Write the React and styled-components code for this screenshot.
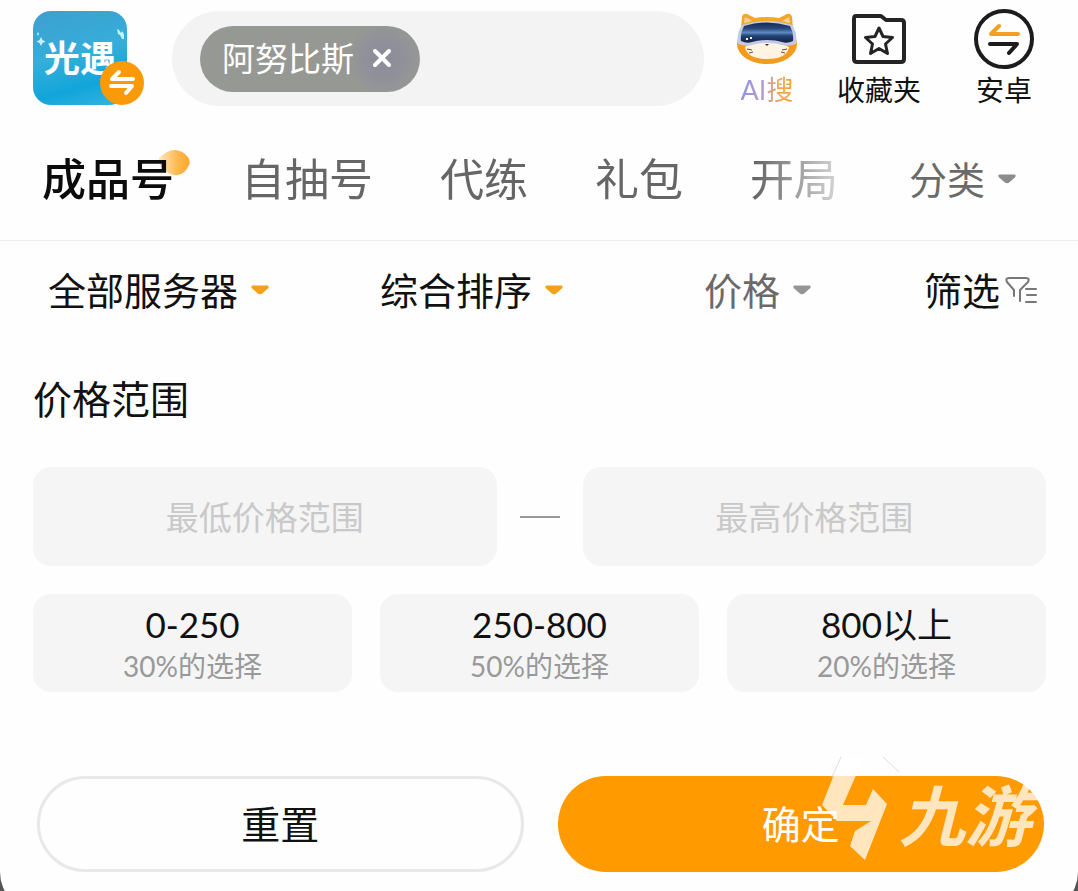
import React, { useState } from 'react';
import styled, { createGlobalStyle } from 'styled-components';

const GlobalStyle = createGlobalStyle`
    * {
        box-sizing: border-box;
    }

    body {
        margin: 0;
        background: #555;
        color: #111;
        font-family: Lato, "Noto Sans CJK SC", sans-serif;
    }

    button, input, select {
        margin: 0;
        border: 0;
        padding: 0;
        background: none;
        color: inherit;
        font: inherit;
    }

    button {
        cursor: pointer;
    }

    svg {
        display: block;
        flex: none;
    }
`;

const Page = styled.div`
    height: 100vh;
    overflow: hidden;
`;

const Sheet = styled.main`
    background: #fefefe;
    border-radius: 0 0 40px 40px;
    padding-bottom: 40px;
`;

const Header = styled.header`
    display: flex;
    align-items: flex-start;
    padding: 8px 44px 0 33px;
    height: 119px;
`;

const GameLogo = styled.button`
    position: relative;
    flex: none;
    margin-top: 3px;
    width: 94px;
    height: 94px;
    border-radius: 18px;
    background: linear-gradient(165deg, #3d9fcf 0%, #36aeda 45%, #12a5da 75%, #35b5e0 100%);
    color: #fff;
    font-size: 36px;
    line-height: 94px;
    font-weight: 700;
`;

const LogoStars = styled.svg`
    position: absolute;
    top: 0;
    left: 0;
`;

const SwapBadge = styled.svg`
    position: absolute;
    right: -17px;
    bottom: 0;
`;

const SearchBar = styled.div`
    display: flex;
    align-items: center;
    flex: 1;
    min-width: 0;
    margin: 3px 0 0 45px;
    padding: 0 28px;
    height: 95px;
    border-radius: 48px;
    background: #f2f3f2;
`;

const SearchInput = styled.input`
    flex: 1;
    min-width: 0;
    height: 66px;
    outline: none;
    font-size: 33px;
`;

const Tag = styled.span`
    display: flex;
    align-items: center;
    justify-content: space-between;
    flex: none;
    padding: 0 29px 2px 22px;
    width: 220px;
    height: 66px;
    border-radius: 33px;
    background: radial-gradient(circle at 184px 33px, #8c8c99 0, #8f909a 18px, #969894 36px);
    color: #fff;
    font-size: 33px;
    line-height: 64px;
`;

const Actions = styled.nav`
    display: flex;
    gap: 40px;
    flex: none;
    margin-left: 33px;
    width: 297px;
`;

const Action = styled.button`
    display: flex;
    flex-direction: column;
    align-items: center;
    min-width: 60px;
    font-size: ${props => (props.$small ? 27 : 28)}px;
    line-height: 40px;
    white-space: nowrap;

    &:last-child {
        margin-left: auto;
    }
`;

const IconBox = styled.span`
    display: flex;
    align-items: center;
    height: 62px;
`;

const AiLabel = styled.span`
    background: linear-gradient(90deg, #8f95e0 0%, #b49ccf 40%, #efa94f 75%, #f0a33c 100%);
    background-clip: text;
    color: transparent;
`;

const Tabs = styled.nav`
    display: flex;
    align-items: center;
    height: 122px;
    padding: 0 62px 2px 42px;
    border-bottom: 1px solid #ececec;
`;

const TabScroller = styled.div`
    display: flex;
    flex: 1;
    gap: 67px;
    min-width: 0;
    overflow: hidden;
    margin-right: 64px;
    mask-image: linear-gradient(90deg, #000 calc(100% - 90px), rgba(0, 0, 0, 0.2));
`;

const Tab = styled.button`
    position: relative;
    z-index: 0;
    flex: none;
    color: ${props => (props.$active ? '#0c0c0c' : '#666')};
    font-size: 44px;
    line-height: 64px;
    font-weight: ${props => (props.$active ? 500 : 400)};
`;

const TabSpot = styled.svg`
    position: absolute;
    z-index: -1;
    top: 2px;
    right: -17px;
`;

const Dropdown = styled.button`
    display: flex;
    align-items: center;
    gap: ${props => props.$gap || 13}px;
    color: ${props => (props.$muted ? '#6a6a6a' : '#111')};
    font-size: 38px;
    line-height: 56px;
    white-space: nowrap;
`;

const Filters = styled.div`
    display: grid;
    grid-template-columns: 332fr 324fr 220fr auto;
    align-items: center;
    height: 99px;
    padding: 0 41px 2px 48px;
`;

const Panel = styled.form`
    padding: 0 32px 0 33px;
`;

const PanelTitle = styled.h2`
    margin: 0;
    padding-top: 31px;
    height: 127px;
    font-size: 39px;
    line-height: 56px;
    font-weight: 400;
`;

const RangeRow = styled.div`
    display: flex;
    align-items: center;
    gap: 23px;
`;

const PriceInput = styled.input`
    flex: 1;
    min-width: 0;
    height: 99px;
    border-radius: 18px;
    background: #f5f5f5;
    text-align: center;
    font-size: 33px;

    &::placeholder {
        color: #c9c9c9;
        opacity: 1;
    }
`;

const Dash = styled.span`
    width: 40px;
    height: 2px;
    background: #999;
`;

const Presets = styled.div`
    display: grid;
    grid-template-columns: repeat(3, 1fr);
    gap: 28px;
    margin-top: 28px;
`;

const Preset = styled.button`
    display: flex;
    flex-direction: column;
    align-items: center;
    justify-content: center;
    padding-top: 4px;
    height: 98px;
    border-radius: 18px;
    background: #f5f5f5;
    font-size: 35px;
    line-height: 42px;
`;

const PresetHint = styled.span`
    color: #999;
    font-size: 28px;
`;

const Footer = styled.div`
    position: relative;
    display: grid;
    grid-template-columns: 1fr 1fr;
    gap: 34px;
    margin-top: 84px;
    padding: 0 2px 0 4px;
`;

const FooterButton = styled.button`
    padding-bottom: 4px;
    height: 96px;
    border: ${props => (props.$primary ? 0 : '3px solid #e8e8e8')};
    border-radius: 48px;
    background: ${props => (props.$primary ? '#ff9a00' : '#fefefe')};
    color: ${props => (props.$primary ? '#fff' : '#111')};
    font-size: 39px;
`;

const Watermark = styled.div`
    position: absolute;
    right: 15px;
    bottom: 11px;
    display: flex;
    align-items: center;
    color: rgba(255, 255, 255, 0.75);
    pointer-events: none;
`;

const WatermarkText = styled.span`
    padding-top: 16px;
    font-size: 66px;
    line-height: 80px;
    font-style: italic;
    font-weight: 700;
`;

const presets = [
    { range: '0-250', hint: '30%的选择' },
    { range: '250-800', hint: '50%的选择' },
    { range: '800以上', hint: '20%的选择' },
];

const tabs = ['成品号', '自抽号', '代练', '礼包', '开局'];

function Caret({ color }) {
    return (
        <svg width="18" height="10" viewBox="0 0 18 10">
            <path d="M2 0.5h14c1.8 0 2.2 1.6 1 2.7l-5.5 5c-1.500 1.300-3.500 1.300-5 0l-5.500-5C-.2 2.100.2.500 2 .5z" fill={color} />
        </svg>
    );
}

function CatIcon() {
    return (
        <svg width="60" height="52" viewBox="0 0 60 52">
            <defs>
                <linearGradient id="visor" x1="0" y1="0" x2="0" y2="1">
                    <stop offset="0" stopColor="#16284f" />
                    <stop offset="0.3" stopColor="#29487c" />
                    <stop offset="0.5" stopColor="#5f8cc0" />
                    <stop offset="0.65" stopColor="#24437a" />
                    <stop offset="1" stopColor="#14213f" />
                </linearGradient>
            </defs>
            <path d="M4 16L5 4q1-4 5-3l8 4q12-2 24 0l8-4q4-1 5 3l1 12z" fill="#f5a42c" />
            <path d="M7 10l1-6 7 4zM53 10l-1-6-7 4z" fill="#ffd79a" />
            <ellipse cx="30" cy="31" rx="30" ry="20" fill="#f49a1c" />
            <path d="M8 34q22-12 44 0-2 12-22 12T8 34z" fill="#fff3e4" />
            <path d="M5 12Q30 4 55 12q6 9 4 19-8 3-14 1-6-2-15-2t-15 2q-6 2-14-1Q-1 21 5 12z" fill="#c3cae6" />
            <path d="M7 13q23-7 46 0 4 7 3 15-6 3-11 1-6-2-15-2t-15 2q-5 2-11-1-1-8 3-15z" fill="url(#visor)" />
            <path d="M9 26h2M13 25h2" stroke="#fff" strokeWidth="2" />
            <path d="M28 31h4l-2 2z" fill="#333" />
            <path d="M10 36l5 1M12 40l4-1M50 36l-5 1M48 40l-4-1" stroke="#6b4a2a" />
        </svg>
    );
}

function FolderIcon() {
    return (
        <svg width="54" height="50" viewBox="0 0 54 50" fill="none" stroke="#242424" strokeLinejoin="round">
            <path d="M4 2h25l5 4h15q3 0 3 3v36q0 3-3 3H5q-3 0-3-3V5q0-3 2-3z" strokeWidth="4" />
            <path d="M27 14l4 8.500 9.500 1-7 6.500 2 9.500-8.500-5-8.500 5 2-9.500-7-6.500 9.500-1z" strokeWidth="3" />
        </svg>
    );
}

function SwapIcon() {
    return (
        <svg width="60" height="60" viewBox="0 0 60 60" fill="none" strokeWidth="4" strokeLinecap="round" strokeLinejoin="round">
            <circle cx="30" cy="30" r="28" stroke="#1c1c1c" />
            <path d="M44 25H17l8-8" stroke="#f3a022" />
            <path d="M16 35h27l-8 9" stroke="#1c1c1c" />
        </svg>
    );
}

function FilterIcon() {
    return (
        <svg width="32" height="28" viewBox="0 0 32 28" fill="none" stroke="#777" strokeWidth="2" strokeLinecap="round" strokeLinejoin="round">
            <path d="M9 20v-6L2 6q-2-4 2-4h17q4 0 2 4l-8 8v11M21 13h10M22 19h9M21 26h10" />
        </svg>
    );
}

function App() {
    const [tag, setTag] = useState('阿努比斯');
    const [minPrice, setMinPrice] = useState('');
    const [maxPrice, setMaxPrice] = useState('');
    const [active, setActive] = useState('成品号');

    const reset = () => {
        setMinPrice('');
        setMaxPrice('');
    };

    return (
        <Page>
            <GlobalStyle />
            <Sheet>
                <Header>
                    <GameLogo type="button">
                        光遇
                        <LogoStars width="94" height="94" viewBox="0 0 94 94" fill="#c4f3ff">
                            <path d="M8 26l1.500 3 3 1.500-3 1.500L8 35l-1.500-3-3-1.500 3-1.500zM5 21l1 2-1 2-1-2zM84 18l2 1 2 3 1-2 2 3v5h-2l-2-4-2-1z" />
                        </LogoStars>
                        <SwapBadge width="44" height="44" viewBox="0 0 44 44" fill="none" stroke="#fff" strokeWidth="4" strokeLinecap="round" strokeLinejoin="round">
                            <circle cx="22" cy="22" r="22" fill="#fb9a07" stroke="none" />
                            <path d="M33 18H12l7-7M11 25h21l-6 7" />
                        </SwapBadge>
                    </GameLogo>
                    <SearchBar>
                        {tag && (
                            <Tag>
                                {tag}
                                <button type="button" aria-label="×" onClick={() => setTag('')}>
                                    <svg width="18" height="18" viewBox="0 0 18 18" stroke="#fff" strokeWidth="4" strokeLinecap="round">
                                        <path d="M2 2l14 14M16 2L2 16" />
                                    </svg>
                                </button>
                            </Tag>
                        )}
                        <SearchInput type="search" aria-label="搜" />
                    </SearchBar>
                    <Actions>
                        <Action type="button" $small>
                            <IconBox><CatIcon /></IconBox>
                            <AiLabel>AI搜</AiLabel>
                        </Action>
                        <Action type="button">
                            <IconBox><FolderIcon /></IconBox>
                            收藏夹
                        </Action>
                        <Action type="button">
                            <IconBox><SwapIcon /></IconBox>
                            安卓
                        </Action>
                    </Actions>
                </Header>
                <Tabs>
                    <TabScroller>
                        {tabs.map(name => (
                            <Tab key={name} type="button" $active={name === active} onClick={() => setActive(name)}>
                                {name}
                                {name === active && (
                                    <TabSpot width="36" height="30" viewBox="0 0 36 30">
                                        <defs>
                                            <linearGradient id="spot">
                                                <stop offset="0" stopColor="#ffe9c2" />
                                                <stop offset="0.6" stopColor="#fdb94f" />
                                                <stop offset="1" stopColor="#fba62f" />
                                            </linearGradient>
                                        </defs>
                                        <path d="M4 9Q12 1 20 1q8 1 12 6 4 4 2 9-4 9-11 10-8 1-13-5-8-6-6-12z" fill="url(#spot)" />
                                    </TabSpot>
                                )}
                            </Tab>
                        ))}
                    </TabScroller>
                    <Dropdown type="button" $muted>
                        分类
                        <Caret color="#8c8c8c" />
                    </Dropdown>
                </Tabs>
                <Filters>
                    <Dropdown type="button">
                        全部服务器
                        <Caret color="#f5a018" />
                    </Dropdown>
                    <Dropdown type="button">
                        综合排序
                        <Caret color="#f5a018" />
                    </Dropdown>
                    <Dropdown type="button" $muted>
                        价格
                        <Caret color="#959595" />
                    </Dropdown>
                    <Dropdown type="button" $gap={5}>
                        筛选
                        <FilterIcon />
                    </Dropdown>
                </Filters>
                <Panel onSubmit={e => e.preventDefault()}>
                    <PanelTitle>价格范围</PanelTitle>
                    <RangeRow>
                        <PriceInput
                            aria-label="最低价格范围"
                            placeholder="最低价格范围"
                            value={minPrice}
                            onChange={e => setMinPrice(e.target.value)}
                        />
                        <Dash />
                        <PriceInput
                            aria-label="最高价格范围"
                            placeholder="最高价格范围"
                            value={maxPrice}
                            onChange={e => setMaxPrice(e.target.value)}
                        />
                    </RangeRow>
                    <Presets>
                        {presets.map(p => (
                            <Preset key={p.range} type="button">
                                {p.range}
                                <PresetHint>{p.hint}</PresetHint>
                            </Preset>
                        ))}
                    </Presets>
                    <Footer>
                        <FooterButton type="button" onClick={reset}>重置</FooterButton>
                        <FooterButton type="submit" $primary>确定</FooterButton>
                        <Watermark>
                            <svg width="80" height="106" viewBox="0 0 80 106" fill="currentColor">
                                <path d="M22 2h23L24 50h23l7-16 14 15-22 56-15-14 5-15 16-10H18L3 50z" />
                                <path d="M22 2L13 22M64 2l16 15" stroke="#ddd" fill="none" />
                            </svg>
                            <WatermarkText>九游</WatermarkText>
                        </Watermark>
                    </Footer>
                </Panel>
            </Sheet>
        </Page>
    );
}

export default App;
